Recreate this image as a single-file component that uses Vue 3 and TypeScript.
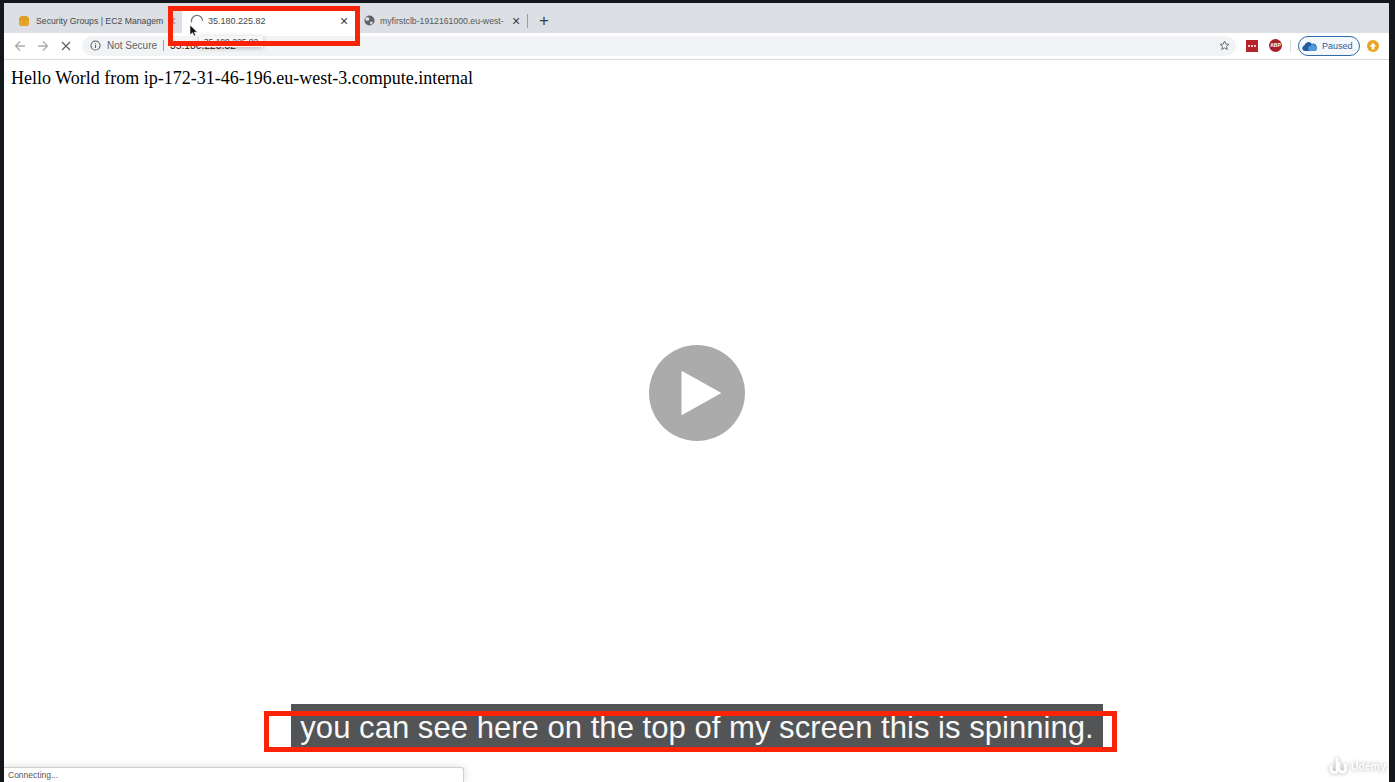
<template>
  <div class="screen">
    <div class="browser">
      <div class="tabstrip">
        <div class="tab tab--first">
          <svg class="favicon" viewBox="0 0 12 12" width="12" height="12">
            <path d="M1 2.800 3 1h6l2 1.800v6.900L9.500 11h-7L1 9.700z" fill="#e8a52c" />
            <path d="M4.600 1v3.400M7.400 1v3.400M1 4.400h10M6 4.400V11" stroke="#c98a1c" stroke-width=".6" fill="none" />
          </svg>
          <span class="tab__title">Security Groups | EC2 Managem</span>
          <span class="tab__close tab__close--dim">×</span>
        </div>
        <div class="tab tab--active">
          <svg class="spinner" viewBox="0 0 14 14" width="14" height="14">
            <path d="M1.600 8.500A5.600 5.600 0 1 1 12.600 7" stroke="#777" stroke-width="1.300" fill="none" />
          </svg>
          <span class="tab__title">35.180.225.82</span>
          <span class="tab__close">×</span>
        </div>
        <div class="tab tab--third">
          <svg class="favicon" viewBox="0 0 12 12" width="11" height="11">
            <circle cx="6" cy="6" r="5.500" fill="#5f6368" />
            <path d="M3 2.200 6 3.400 5.200 6 2.600 6.400 1.200 4.400zM7 7l2.800.5-1.600 3L6.600 9.600z" fill="#dee1e6" />
          </svg>
          <span class="tab__title tab__title--fade">myfirstclb-1912161000.eu-west-</span>
          <span class="tab__close">×</span>
        </div>
        <span class="tab-sep"></span>
        <span class="tab-new">+</span>
      </div>

      <div class="toolbar">
        <svg class="nav nav--off" viewBox="0 0 12 12" width="12" height="12">
          <path d="M11 6H1.500M6 1.500 1.500 6 6 10.500" stroke="#a9adb1" stroke-width="1.300" fill="none" />
        </svg>
        <svg class="nav nav--off" viewBox="0 0 12 12" width="12" height="12">
          <path d="M1 6h9.500M6 1.500 10.500 6 6 10.500" stroke="#a9adb1" stroke-width="1.300" fill="none" />
        </svg>
        <svg class="nav nav--stop" viewBox="0 0 10 10" width="10" height="10">
          <path d="M1 1l8 8M9 1 1 9" stroke="#5f6368" stroke-width="1.300" fill="none" />
        </svg>
        <div class="omnibox">
          <svg viewBox="0 0 12 12" width="11" height="11">
            <circle cx="6" cy="6" r="5" stroke="#5f6368" stroke-width="1.100" fill="none" />
            <path d="M6 5.200v3.400M6 3.200v1" stroke="#5f6368" stroke-width="1.200" />
          </svg>
          <span class="omnibox__secure">Not Secure</span>
          <span class="omnibox__bar"></span>
          <span class="omnibox__url">35.180.225.82</span>
          <svg class="omnibox__star" viewBox="0 0 12 12" width="11" height="11">
            <path d="M6 1.200 7.400 4.400l3.400.3-2.600 2.300.8 3.400L6 8.600l-3 1.800.8-3.400L1.200 4.700l3.400-.3z" stroke="#5f6368" stroke-width="1" fill="none" />
          </svg>
        </div>
        <div class="ext ext--lastpass"><i></i><i></i><i></i></div>
        <div class="ext ext--abp">ABP</div>
        <span class="toolbar__sep"></span>
        <div class="paused">
          <svg viewBox="0 0 16 12" width="16" height="12">
            <path d="M2.800 11a2.800 2.800 0 0 1-.4-5.500A4 4 0 0 1 9.800 4 3.500 3.500 0 0 1 12.500 11z" fill="#1f5f9f" />
            <path d="M8 11a2.600 2.600 0 0 1 .2-5.100A3 3 0 0 1 13.600 6.200 2.500 2.500 0 0 1 13 11z" fill="#4d9ad8" />
          </svg>
          <span>Paused</span>
        </div>
        <div class="update">
          <svg viewBox="0 0 8 8" width="8" height="8">
            <path d="M4 .8 7.400 4.400H5.300V7.400H2.700V4.400H.6z" fill="#fff" />
          </svg>
        </div>
      </div>

      <div class="page">Hello World from ip-172-31-46-196.eu-west-3.compute.internal</div>
    </div>

    <!-- overlays on top of the recording -->
    <div class="tab-tip">35.180.225.82</div>
    <div class="highlight highlight--tab"></div>
    <svg class="cursor" viewBox="0 0 9 13" width="9" height="13">
      <path d="M1 1v10l2.500-2.300L5 12l1.600-.7L5.200 8.200H8.500z" fill="#111" stroke="#fff" stroke-width=".6" />
    </svg>

    <div class="play">
      <svg viewBox="0 0 40 46" width="40" height="46">
        <path d="M1 1.500 39.500 23 1 44.500z" fill="#fff" stroke="#fff" stroke-linejoin="round" />
      </svg>
    </div>

    <div class="caption">
      <span>you can see here on the top of my screen this is spinning.</span>
    </div>
    <div class="highlight highlight--caption"></div>

    <div class="status">Connecting...</div>

    <div class="watermark">
      <svg viewBox="0 0 20 20" width="20" height="20">
        <path d="M3 10v3a3.500 3.500 0 0 0 6 2.500M9 3v10M11 7v6a3.500 3.500 0 0 0 6.500 1.500V9" stroke="#fff" stroke-width="2.600" stroke-linecap="round" fill="none" />
      </svg>
      <span>Udemy</span>
    </div>
  </div>
</template>

<script setup lang="ts">
</script>

<style>
html,
body {
  margin: 0;
  background: #14181d;
  overflow: hidden;
}
</style>

<style scoped>
.screen {
  position: relative;
  width: 1395px;
  height: 782px;
  box-sizing: border-box;
  padding: 3px 6px 0 4px;
  background: #14181d;
  overflow: hidden;
  font-family: "Liberation Sans", Arial, sans-serif;
}

.browser {
  display: flex;
  flex-direction: column;
  height: 100%;
  background: #fff;
}

.tabstrip {
  display: flex;
  align-items: center;
  height: 30px;
  padding-left: 14px;
  background: #dcdfe3;
  color: #45484c;
  font-size: 8.700px;
}

.tab {
  display: flex;
  align-items: center;
  width: 164px;
  height: 100%;
  box-sizing: border-box;
  padding-top: 5px;
}

.tab--first {
  padding-right: 4px;
}

.favicon {
  flex: none;
}

.tab__title {
  margin-left: 6px;
  flex: 1;
  white-space: nowrap;
  overflow: hidden;
}

.tab__title--fade {
  color: #55585c;
}

.tab__close {
  flex: none;
  width: 12px;
  color: #3c4043;
  font-size: 14px;
  line-height: 12px;
  text-align: center;
}

.tab__close--dim {
  color: #888;
}

.tab--active {
  width: 178px;
  height: 26px;
  margin-top: 4px;
  padding: 1px 10px 0 8px;
  background: #fff;
  border-radius: 7px 7px 0 0;
  font-size: 9px;
}

.tab--active .tab__title {
  margin-left: 4px;
}

.tab--third {
  width: 167px;
  padding: 5px 5px 0 4px;
}

.tab--third .tab__title {
  margin-left: 5px;
}

.tab-sep {
  width: 1px;
  height: 14px;
  margin-top: 5px;
  background: #9a9da1;
}

.tab-new {
  margin: 5px 0 0 11px;
  color: #3c4043;
  font-size: 17px;
  line-height: 1;
}

.toolbar {
  display: flex;
  align-items: center;
  height: 27px;
  padding: 0 10px 1px 10px;
  box-sizing: border-box;
  border-bottom: 1px solid #d9dadc;
  background: #fff;
}

.nav {
  flex: none;
  margin-right: 11px;
}

.nav--stop {
  margin-left: 1px;
  margin-right: 10px;
}

.omnibox {
  display: flex;
  flex: 1;
  align-items: center;
  height: 20px;
  margin-left: 1px;
  padding: 0 6px 0 8px;
  background: #f1f3f4;
  border-radius: 10px;
  color: #5f6368;
  font-size: 10px;
}

.omnibox__secure {
  margin-left: 6px;
}

.omnibox__bar {
  width: 1px;
  height: 11px;
  margin: 0 6px;
  background: #9a9da1;
}

.omnibox__url {
  color: #202124;
  font-size: 10.300px;
}

.omnibox__star {
  margin-left: auto;
}

.ext {
  flex: none;
  box-sizing: border-box;
}

.ext--lastpass {
  display: flex;
  align-items: center;
  justify-content: center;
  gap: 1px;
  width: 12px;
  height: 12px;
  margin-left: 10px;
  background: #b5232a;
}

.ext--lastpass i {
  width: 2px;
  height: 2px;
  background: #fff;
  border-radius: 50%;
}

.ext--abp {
  width: 13px;
  height: 13px;
  margin-left: 11px;
  background: #a81f2a;
  border-radius: 50%;
  color: #fff;
  font-size: 5px;
  font-weight: 700;
  line-height: 13px;
  text-align: center;
}

.toolbar__sep {
  width: 1px;
  height: 12px;
  margin: 0 7px 0 8px;
  background: #dadce0;
}

.paused {
  display: flex;
  align-items: center;
  gap: 4px;
  width: 62px;
  height: 20px;
  box-sizing: border-box;
  padding-left: 3px;
  border: 1px solid #2f6ba8;
  border-radius: 10px;
  background: #f4f7fc;
  color: #2a5f9e;
  font-size: 9px;
}

.update {
  display: flex;
  align-items: center;
  justify-content: center;
  width: 12px;
  height: 12px;
  margin-left: 7px;
  border-radius: 50%;
  background: #e9a320;
}

.page {
  padding: 9px 7px;
  color: #000;
  font-family: "Liberation Serif", "Times New Roman", serif;
  font-size: 18px;
  line-height: 19px;
}

.tab-tip {
  position: absolute;
  left: 199px;
  top: 36px;
  width: 64px;
  height: 11px;
  overflow: hidden;
  background: #f6f6f6;
  box-shadow: 0 1px 5px rgba(0, 0, 0, 0.25);
  color: #444;
  font-size: 8.500px;
  line-height: 13px;
  text-align: center;
}

.highlight {
  position: absolute;
  box-sizing: border-box;
  border: 5px solid #fa2306;
}

.highlight--tab {
  left: 168px;
  top: 6px;
  width: 192px;
  height: 40px;
}

.highlight--caption {
  left: 264px;
  top: 711px;
  width: 853px;
  height: 41px;
}

.cursor {
  position: absolute;
  left: 189px;
  top: 24px;
}

.play {
  position: absolute;
  left: 649px;
  top: 345px;
  display: flex;
  align-items: center;
  justify-content: center;
  width: 96px;
  height: 96px;
  padding-left: 8px;
  box-sizing: border-box;
  border-radius: 50%;
  background: #ababab;
}

.caption {
  position: absolute;
  left: 291px;
  top: 704px;
  display: flex;
  align-items: flex-end;
  justify-content: center;
  width: 812px;
  height: 43px;
  background: #535456;
  color: #f8f8f8;
  font-size: 31.100px;
  line-height: 38px;
  white-space: nowrap;
}

.status {
  position: absolute;
  left: 4px;
  top: 767px;
  width: 460px;
  height: 15px;
  box-sizing: border-box;
  padding: 2px 4px;
  background: #fff;
  border: 1px solid #cfcfcf;
  border-bottom: 0;
  border-left: 0;
  border-radius: 0 3px 0 0;
  box-shadow: 0 0 8px rgba(0, 0, 0, 0.15);
  color: #55585c;
  font-size: 8.500px;
  line-height: 11px;
}

.watermark {
  position: absolute;
  left: 1328px;
  top: 756px;
  display: flex;
  align-items: center;
  gap: 3px;
  color: #fff;
  font-size: 10.500px;
  font-weight: 700;
  filter: drop-shadow(0 0 2px rgba(0, 0, 0, 0.35));
}
</style>
